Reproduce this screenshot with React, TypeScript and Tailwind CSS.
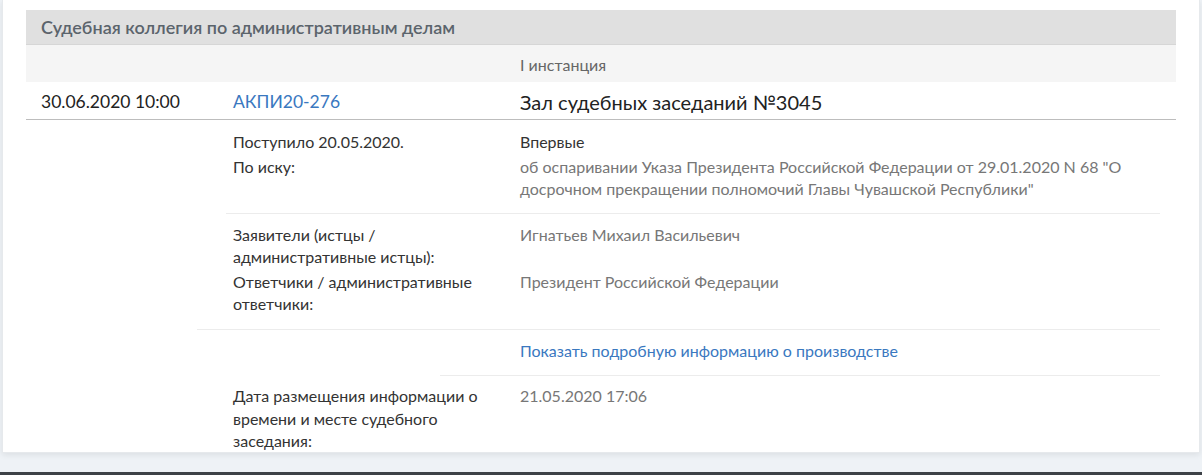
import React from 'react';

const Label: React.FC<{ children: React.ReactNode }> = ({ children }) => (
  <div className="w-[250px] shrink-0 text-[#333]">{children}</div>
);

const App: React.FC = () => {
  return (
    <div className="min-h-[475px] w-[1202px] bg-[#eef2f6] font-['Lato','Noto_Sans',sans-serif] flex flex-col">
      <div className="mx-[2px] bg-white h-[453px] pt-[10px] px-[23px] shadow-[0_2px_6px_rgba(0,0,0,0.08)] border-x border-b border-[#e6e9ec] overflow-hidden">
        {/* header band */}
        <div className="bg-[#e0e0e0] h-[35px] flex items-center pl-[15px] border-b border-[#d6d6d6]">
          <span className="text-[18px] font-semibold text-[#5b646c]">
            Судебная коллегия по административным делам
          </span>
        </div>
        <div className="bg-[#f5f5f5] h-[37px] flex items-end pb-[5px]">
          <span className="ml-[494px] text-[16px] text-[#666]">I инстанция</span>
        </div>

        {/* main row */}
        <div className="flex items-center h-[38px] pt-[3px] border-b border-[#bdbdbd]">
          <span className="w-[207px] pl-[15px] text-[17.5px] text-[#222]">30.06.2020 10:00</span>
          <a className="w-[287px] text-[17.5px] text-[#3a78bf]">АКПИ20-276</a>
          <span className="text-[20px] text-[#222]">Зал судебных заседаний №3045</span>
        </div>

        {/* details */}
        <div className="text-[16px] leading-[22.5px]">
          <div className="ml-[200px] mr-[16px] border-b border-[#ececec] pt-[11px] pb-[12px]">
            <div className="flex pl-[7px] mb-[2px]">
              <Label>Поступило 20.05.2020.</Label>
              <div className="ml-[37px] text-[#333]">Впервые</div>
            </div>
            <div className="flex pl-[7px]">
              <Label>По иску:</Label>
              <div className="ml-[37px] w-[640px] text-[#777]">
                об оспаривании Указа Президента Российской Федерации от 29.01.2020 N 68 "О досрочном прекращении полномочий Главы Чувашской Республики"
              </div>
            </div>
          </div>

          <div className="ml-[171px] mr-[16px] border-b border-[#ececec] pt-[10px] pb-[13px]">
            <div className="flex pl-[36px] mb-[2px]">
              <Label>Заявители (истцы / административные истцы):</Label>
              <div className="ml-[37px] text-[#777]">Игнатьев Михаил Васильевич</div>
            </div>
            <div className="flex pl-[36px]">
              <Label>Ответчики / административные ответчики:</Label>
              <div className="ml-[37px] text-[#777]">Президент Российской Федерации</div>
            </div>
          </div>

          <div className="ml-[414px] mr-[16px] border-b border-[#ececec] pt-[10px] pb-[13px]">
            <a className="ml-[80px] text-[#3a78bf]">Показать подробную информацию о производстве</a>
          </div>

          <div className="ml-[200px] pt-[9px]">
            <div className="flex pl-[7px]">
              <Label>Дата размещения информации о времени и месте судебного заседания:</Label>
              <div className="ml-[37px] text-[#777]">21.05.2020 17:06</div>
            </div>
          </div>
        </div>
      </div>
      <div className="flex-1" />
      <div className="h-[3px] bg-[#3d4247]" />
    </div>
  );
};

export default App;
